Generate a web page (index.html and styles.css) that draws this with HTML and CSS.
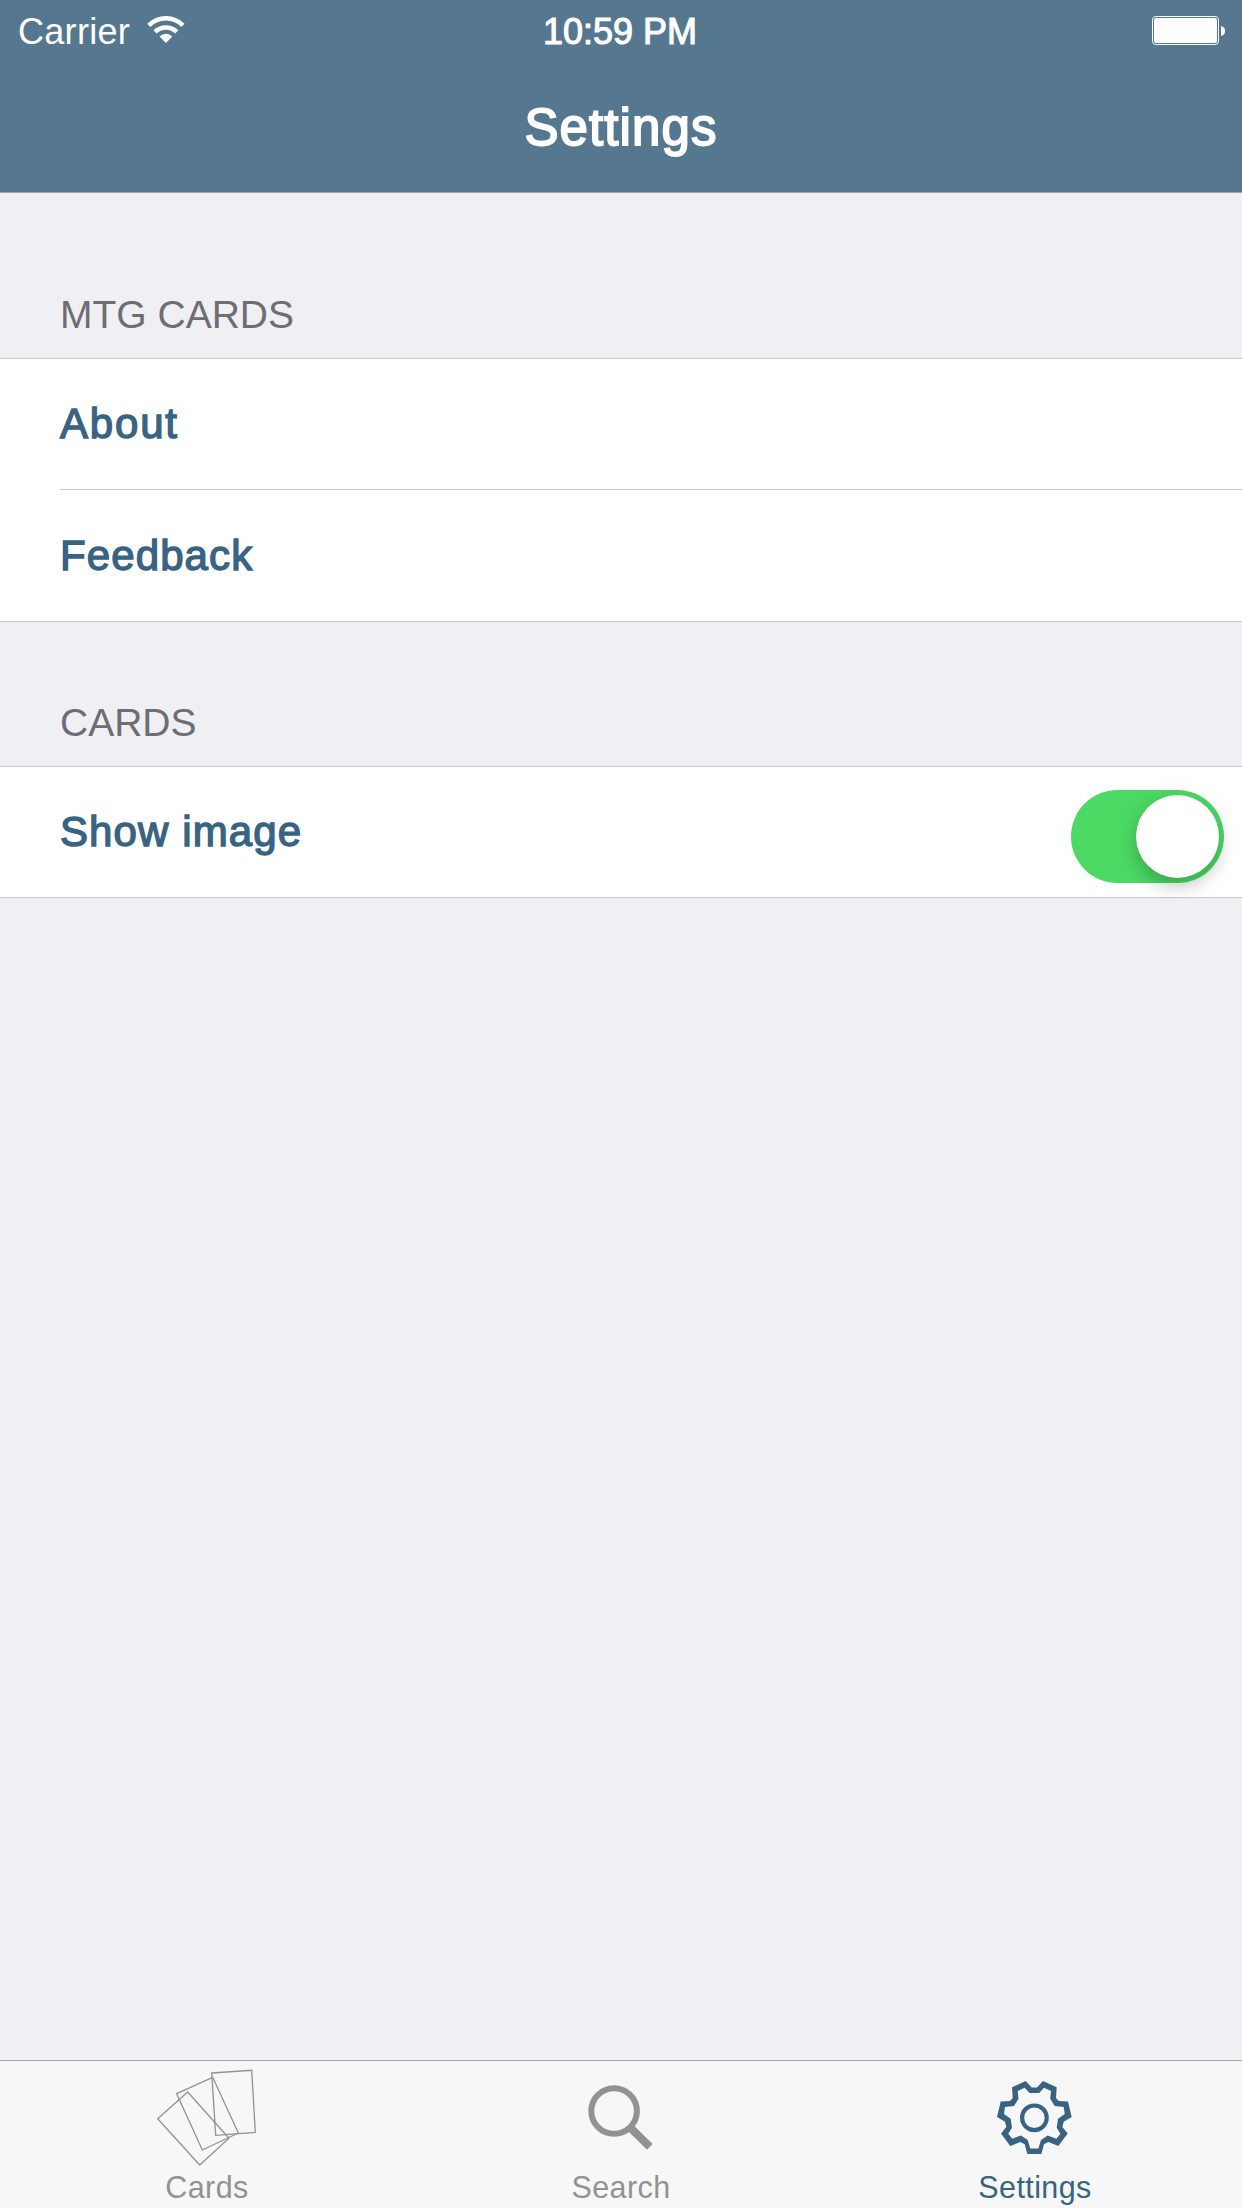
FILE: index.html
```html
<!DOCTYPE html>
<html lang="en">
<head>
<meta charset="utf-8">
<title>Settings</title>
<link rel="stylesheet" href="styles.css">
</head>
<body>
<div class="app">
  <header class="header">
    <div class="status">
      <div class="status-left">
        <span class="carrier">Carrier</span>
        <svg class="wifi" width="38" height="28" viewBox="0 0 38 28">
          <g fill="none" stroke="#fff" stroke-width="4.4">
            <path d="M1.8 9.4A24 24 0 0 1 36 9.4"/>
            <path d="M8 15.9A15.6 15.6 0 0 1 29.8 15.9"/>
          </g>
          <path d="M12.5 20.4A9 9 0 0 1 25.3 20.4L18.9 27Z" fill="#fff"/>
        </svg>
      </div>
      <span class="clock">10:59 PM</span>
      <svg class="battery" width="74" height="29" viewBox="0 0 74 29">
        <rect x=".5" y=".5" width="66" height="28" rx="3.5" fill="none" stroke="#fff"/>
        <rect x="2" y="2" width="63" height="25" rx="2.5" fill="#fff"/>
        <path d="M69 10C72 10.5 73 12.5 73 15S72 19.5 69 20Z" fill="#fff"/>
      </svg>
    </div>
    <h1 class="title">Settings</h1>
  </header>

  <main class="content">
    <h2 class="section-title first">MTG CARDS</h2>
    <ul class="group">
      <li class="row"><span class="label about">About</span></li>
      <li class="row"><span class="label">Feedback</span></li>
    </ul>
    <h2 class="section-title">CARDS</h2>
    <ul class="group">
      <li class="row"><span class="label show">Show image</span><span class="switch"><span class="knob"></span></span></li>
    </ul>
  </main>

  <nav class="tabs">
    <a class="tab">
      <svg class="icon" width="112" height="105" viewBox="0 0 112 105" fill="none" stroke="#929292" stroke-width="1.3">
        <path d="M6.7 57.7L36.7 31L78 77.3L48.7 104Z"/>
        <path d="M25.7 32.7L61.7 16.3L87.3 72L51.3 89Z"/>
        <path d="M60.7 12L100.7 9.3L104.3 71.3L64.7 74.3Z"/>
      </svg>
      <span class="tab-label">Cards</span>
    </a>
    <a class="tab">
      <svg class="icon" width="112" height="105" viewBox="0 0 112 105" fill="none" stroke="#929292">
        <circle cx="49.1" cy="50" r="22.8" stroke-width="6"/>
        <path d="M64 65.4L84.8 85.9" stroke-width="8"/>
      </svg>
      <span class="tab-label">Search</span>
    </a>
    <a class="tab active">
      <svg class="icon" width="112" height="105" viewBox="0 0 112 105">
        <circle cx="55.4" cy="56.8" r="12.3" fill="none" stroke="#396383" stroke-width="4.2"/>
        <path fill="#396383" fill-rule="evenodd" d="M46.7 20L33 26.3L33.7 37L31 39.9L21.7 40.4L18 55.9L26 60.7L27.3 66L22 72.5L31.3 84.9L41.3 81L45.7 83.3L48.3 93H62.4L65 83.3L69.4 81L79.4 84.9L88.7 72.5L83.4 66L84.7 60.7L92.7 55.9L89 40.4L79.7 39.9L77 37L77.7 26.3L64 20L58 26.5H52.7Z
          M45.7 26.7L50.5 31.9H60.2L65 26.7L72 30L71.2 37.8L75.7 45L84.7 45.9L85.7 53L79 57.7L77.7 66.7L81.4 72.7L77.4 77.7L68.7 74.5L62 79L59.4 87.5H51.3L48.7 79L42 74.5L33.3 77.7L29.3 72.7L33 66.7L31.7 57.7L25 53L26 45.9L35 45L39.5 37.8L38.7 30Z"/>
      </svg>
      <span class="tab-label">Settings</span>
    </a>
  </nav>
</div>
</body>
</html>
```
FILE: styles.css
```css
* { box-sizing: border-box; }
body {
  margin: 0;
  font-family: "Liberation Sans", Arial, sans-serif;
  background: #efeff4;
}
.app {
  display: flex;
  flex-direction: column;
  height: 2208px;
}
.header {
  height: 193px;
  background: #557790;
  border-bottom: 1px solid #a9a2ad;
  color: #fff;
}
.status {
  display: grid;
  grid-template-columns: 1fr auto 1fr;
  align-items: center;
  height: 60px;
  padding: 2px 16px 0 18px;
  font-size: 36px;
  line-height: 60px;
}
.status-left {
  display: flex;
  align-items: center;
}
.carrier { letter-spacing: 0.3px; }
.wifi { margin: -5px 0 0 17px; }
.clock {
  margin-right: 4px;
  -webkit-text-stroke: 1.1px #fff;
}
.battery {
  justify-self: end;
  margin-top: -3px;
}
.title {
  margin: 0;
  padding-top: 2px;
  font-size: 51px;
  font-weight: 400;
  line-height: 132px;
  letter-spacing: 1.1px;
  text-align: center;
  -webkit-text-stroke: 1.8px #fff;
}
.content { flex: 1; }
.section-title {
  display: flex;
  align-items: flex-end;
  height: 144px;
  margin: 0;
  padding: 0 60px 20px;
  color: #6d6d72;
  font-size: 39px;
  font-weight: 400;
  line-height: 46px;
}
.section-title.first { height: 165px; }
.group {
  margin: 0;
  padding: 0;
  list-style: none;
  background: #fff;
  border-top: 1px solid #c8c7cc;
  border-bottom: 1px solid #c8c7cc;
}
.row {
  display: flex;
  align-items: center;
  justify-content: space-between;
  height: 130px;
  margin-left: 60px;
  padding-right: 18px;
}
.row + .row {
  height: 132px;
  border-top: 1px solid #c8c7cc;
}
.label {
  color: #396383;
  font-size: 42px;
  line-height: 48px;
  letter-spacing: 1.1px;
  -webkit-text-stroke: 1.4px #396383;
}
.label.about { letter-spacing: 1.8px; }
.switch {
  display: flex;
  justify-content: flex-end;
  width: 153px;
  height: 93px;
  margin-top: 9px;
  padding: 5px;
  border-radius: 47px;
  background: #4cd964;
}
.knob {
  width: 83px;
  height: 83px;
  border-radius: 50%;
  background: #fff;
  box-shadow: 0 9px 16px rgba(0, 0, 0, 0.18), 0 2px 32px rgba(0, 0, 0, 0.07);
}
.tabs {
  display: flex;
  justify-content: space-between;
  height: 148px;
  padding: 0 151px;
  background: #f7f7f7;
  border-top: 1px solid #a7a7ac;
}
.tab {
  display: flex;
  flex-direction: column;
  align-items: center;
  width: 112px;
  color: #929292;
}
.tab.active { color: #396383; }
.icon { flex: none; }
.tab-label {
  font-size: 30.5px;
  line-height: 43px;
  letter-spacing: 0.4px;
  white-space: nowrap;
}
```
